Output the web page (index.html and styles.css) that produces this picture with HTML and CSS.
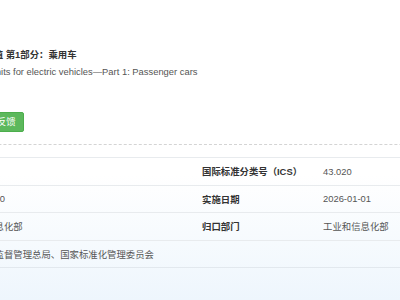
FILE: index.html
```html
<!DOCTYPE html>
<html lang="zh-CN">
<head>
<meta charset="utf-8">
<title>GB 36980.1-2025</title>
<link rel="stylesheet" href="styles.css">
</head>
<body>
<div class="detail">
  <div class="names">
    <div class="cn-name">电动汽车能量消耗量限值 第1部分：乘用车</div>
    <div class="en-name">Energy consumption limits for electric vehicles—Part 1: Passenger cars</div>
  </div>
  <div class="actions">
    <button class="btn btn-feedback">意见反馈</button>
  </div>
  <div class="sep"></div>
  <table class="info">
    <tr>
      <th>标准状态</th><td></td>
      <th>国际标准分类号（ICS）</th><td>43.020</td>
    </tr>
    <tr>
      <th>发布日期</th><td>2025-06-30</td>
      <th>实施日期</th><td>2026-01-01</td>
    </tr>
    <tr>
      <th>主管部门</th><td>工业和信息化部</td>
      <th>归口部门</th><td>工业和信息化部</td>
    </tr>
    <tr>
      <th>发布单位</th><td colspan="3">国家市场监督管理总局、国家标准化管理委员会</td>
    </tr>
    <tr class="empty">
      <th></th><td colspan="3"></td>
    </tr>
  </table>
</div>
</body>
</html>
```
FILE: styles.css
```css
html, body {
  margin: 0;
  padding: 0;
}
body {
  width: 400px;
  height: 300px;
  overflow: hidden;
  font-family: "Liberation Sans", "Noto Sans CJK SC", sans-serif;
  font-size: 9.4px;
  color: #555;
  background: linear-gradient(to bottom, #ffffff 0, #ffffff 175px, #eef6fd 300px);
}
.detail {
  margin-left: -172px;
  width: 760px;
  padding-top: 46px;
}
.names {
  padding-left: 72px;
}
.cn-name {
  font-weight: bold;
  color: #333;
  line-height: 17px;
}
.en-name {
  color: #555;
  line-height: 17px;
  padding-left: 1px;
}
.actions {
  margin-top: 32px;
  padding-left: 142px;
  display: flex;
}
.btn {
  font-family: inherit;
  font-size: 9.4px;
  color: #fff;
  border: 1px solid #4cae4c;
  background: #5cb85c;
  border-radius: 2px;
  height: 20px;
  padding: 0 7px;
  line-height: 18px;
}
.sep {
  margin-top: 12px;
  height: 0;
  border-top: 1px dashed #d4d4d4;
  width: 800px;
}
.info {
  margin-top: 12px;
  border-collapse: collapse;
  width: 732px;
}
.info tr {
  height: 27.5px;
  border-top: 1px solid #e8ebee;
}
.info th, .info td {
  text-align: left;
  padding: 0 8px;
  vertical-align: middle;
  white-space: nowrap;
}
.info th {
  width: 105px;
  font-weight: bold;
  color: #333;
}
.info td {
  width: 229px;
  color: #555;
}
.info tr.empty {
  border-top: 1px solid #e2e8ee;
}
```
